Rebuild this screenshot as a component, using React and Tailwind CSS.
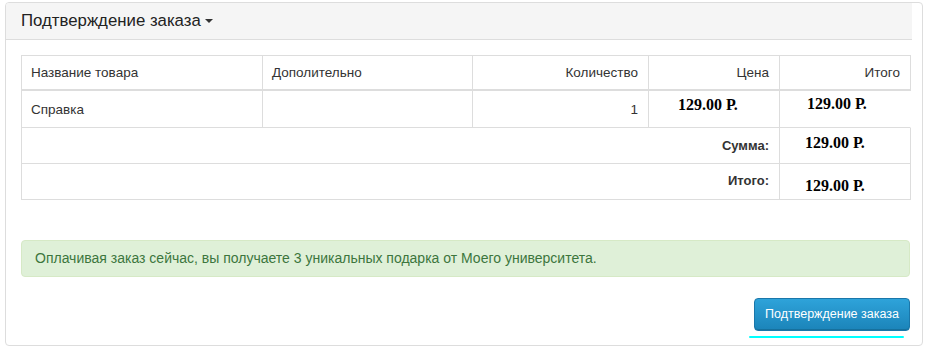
import React from "react";

const sans = { fontFamily: '"Liberation Sans", Arial, sans-serif' };

const Price = ({ className = "" }) => (
  <span
    className={`font-bold text-[16px] text-black ${className}`}
    style={{ fontFamily: '"Liberation Serif", "Times New Roman", serif' }}
  >
    129.00 Р.
  </span>
);

const App = () => {
  return (
    <div
      className="w-[926px] h-[347px] bg-white pt-[2px] pl-[5px] overflow-hidden text-[#333]"
      style={sans}
    >
      <div className="w-[918px] h-[344px] border border-[#dddddd] rounded-[4px] flex flex-col">
        {/* Panel heading */}
        <div className="h-[37px] mr-[10px] bg-[#f5f5f5] border-b border-[#dddddd] rounded-tl-[3px] flex items-center pl-[15px]">
          <h1 className="text-[16.8px] text-[#222] leading-none flex items-center">
            Подтверждение заказа
            <span className="ml-[4px] mt-[1px] w-0 h-0 border-l-[4px] border-r-[4px] border-t-[4px] border-l-transparent border-r-transparent border-t-[#333]" />
          </h1>
        </div>

        {/* Panel body */}
        <div className="pt-[15px] pl-[15px] flex flex-col">
          <table className="w-[889px] border-separate border-spacing-0 border-l border-t border-[#dddddd] text-[13.5px] table-fixed">
            <colgroup>
              <col className="w-[241px]" />
              <col className="w-[210px]" />
              <col className="w-[176px]" />
              <col className="w-[131px]" />
              <col className="w-[131px]" />
            </colgroup>
            <thead>
              <tr>
                <th className="h-[35px] border-r border-b-2 border-[#dddddd] px-[9px] pt-[2px] text-left font-normal">
                  Название товара
                </th>
                <th className="h-[35px] border-r border-b-2 border-[#dddddd] px-[9px] pt-[2px] text-left font-normal">
                  Дополительно
                </th>
                <th className="h-[35px] border-r border-b-2 border-[#dddddd] px-[10px] pt-[2px] text-right font-normal">
                  Количество
                </th>
                <th className="h-[35px] border-r border-b-2 border-[#dddddd] px-[10px] pt-[2px] text-right font-normal">
                  Цена
                </th>
                <th className="h-[35px] border-r border-b-2 border-[#dddddd] px-[10px] pt-[2px] text-right font-normal">
                  Итого
                </th>
              </tr>
            </thead>
            <tbody>
              <tr>
                <td className="h-[37px] border-r border-b border-[#dddddd] px-[9px] pt-[2px]">Справка</td>
                <td className="h-[37px] border-r border-b border-[#dddddd] px-[9px]"></td>
                <td className="h-[37px] border-r border-b border-[#dddddd] px-[10px] pt-[2px] text-right">1</td>
                <td className="h-[37px] border-r border-b border-[#dddddd] pl-[29px] pb-[8px]">
                  <Price />
                </td>
                <td className="h-[37px] border-r border-b border-[#dddddd] border-r-white pl-[27px] pb-[10px]">
                  <Price />
                </td>
              </tr>
              <tr>
                <td
                  colSpan={4}
                  className="h-[36px] border-r border-b border-[#dddddd] px-[10px] text-right font-bold text-[13px]"
                >
                  Сумма:
                </td>
                <td className="h-[36px] border-r border-b border-[#dddddd] pl-[25px] pb-[5px]">
                  <Price />
                </td>
              </tr>
              <tr>
                <td
                  colSpan={4}
                  className="h-[36px] border-r border-b border-[#dddddd] px-[10px] text-right font-bold text-[13px] pb-[2px]"
                >
                  Итого:
                </td>
                <td className="h-[36px] border-r border-b border-[#dddddd] pl-[25px] pt-[9px]">
                  <Price />
                </td>
              </tr>
            </tbody>
          </table>

          <div className="mt-[40px] w-[889px] h-[37px] bg-[#dff0d8] border border-[#d6e9c6] rounded-[4px] text-[#3c763d] text-[14px] flex items-center pl-[13px]">
            Оплачивая заказ сейчас, вы получаете 3 уникальных подарка от Моего университета.
          </div>

          <div className="w-[889px] flex flex-col items-end">
            <button className="mt-[21px] h-[33px] w-[156px] rounded-[4px] border border-[#1a77aa] bg-gradient-to-b from-[#2ea3da] to-[#1b84b9] text-white text-[12.5px] shadow-[inset_0_-1px_0_rgba(0,0,0,0.15)]">
              Подтверждение заказа
            </button>
            <div className="mt-[5px] mr-[6px] w-[155px] h-[2px] bg-[#00ffff] rounded-full" />
          </div>
        </div>
      </div>
    </div>
  );
};

export default App;
